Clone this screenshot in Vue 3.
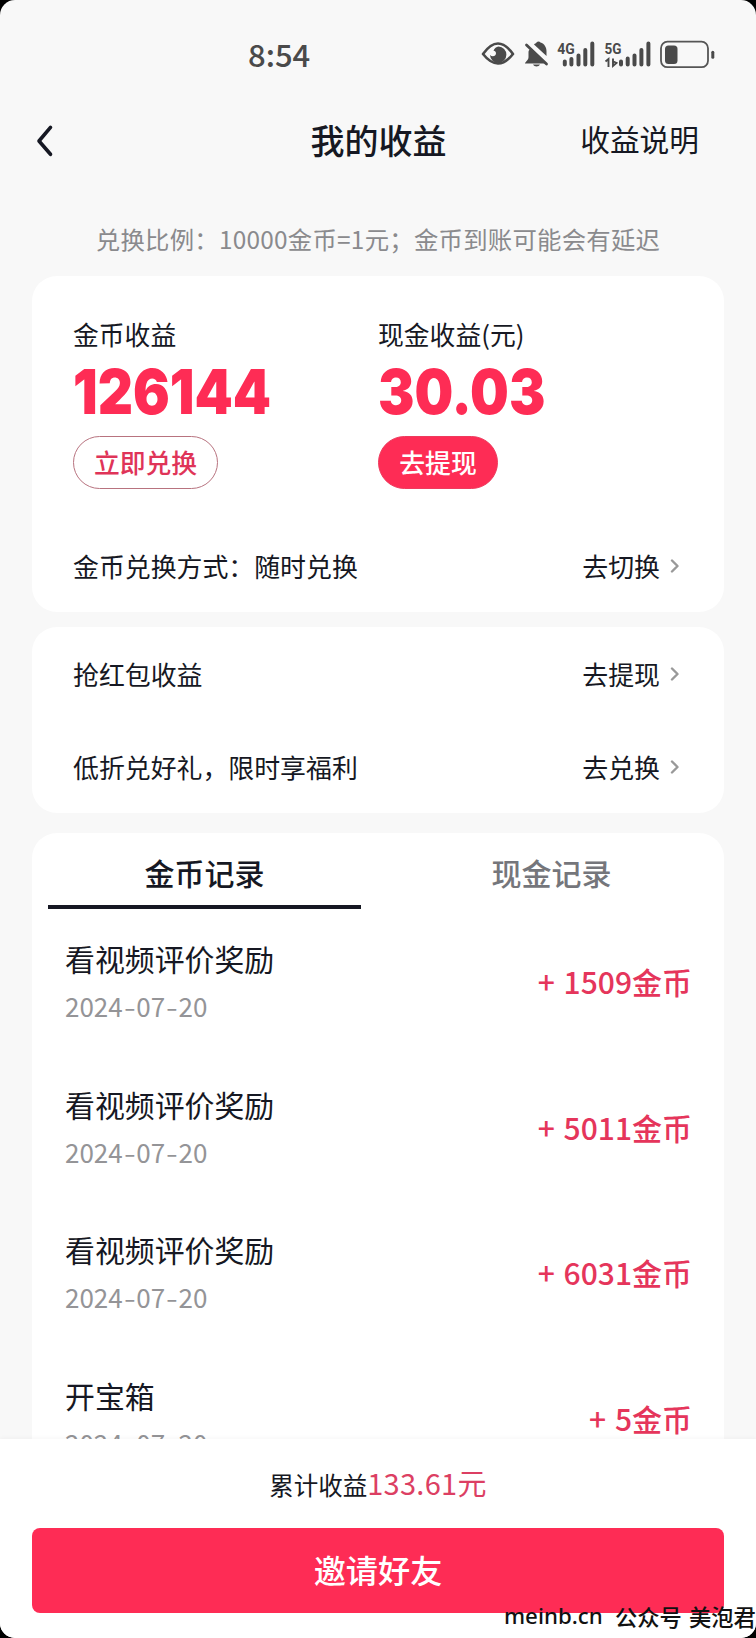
<script setup>
const rows = [
  { label: '抢红包收益', action: '去提现' },
  { label: '低折兑好礼，限时享福利', action: '去兑换' },
]
const records = [
  { title: '看视频评价奖励', date: ['2024', '07', '20'], amount: '1509' },
  { title: '看视频评价奖励', date: ['2024', '07', '20'], amount: '5011' },
  { title: '看视频评价奖励', date: ['2024', '07', '20'], amount: '6031' },
  { title: '开宝箱', date: ['2024', '07', '20'], amount: '5' },
]
</script>

<template>
  <div class="phone">
    <header class="status">
      <span class="clock">8:54</span>
      <svg class="status-icons" width="240" height="44" viewBox="0 -8 240 44" fill="#4a4a4a">
        <path d="M2 15Q17 -6 32 15Q17 34 2 15Z" fill="none" stroke="#4a4a4a" stroke-width="2.600" stroke-linejoin="round" />
        <path d="M17.500 7.500a8.200 8.200 0 1 1-8.500 8.500c2.500 2.500 6 1 6-1.700c0-1.800-1.300-2.800-2.500-2.600c1-2.400 2.800-4 5-4.200z" />
        <path d="M50 10L65 24.500H44c.3-2 3.500-3 3.500-6.500V13c0-1.500.8-2.500 2.500-3z" />
        <path d="M53 5.500c1-1 2-1.300 2.500-2c1-1.500 3-1.500 4 0c4 1.200 6 5 6 9v4.500z" />
        <path d="M52 25.500h7c-1.200 2.500-5.800 2.500-7 0z" />
        <path d="M45.500 6L65.500 25" fill="none" stroke="#4a4a4a" stroke-width="2.800" stroke-linecap="round" />
        <path d="M48.500 4.500L66 21" fill="none" stroke="#f8f8f8" stroke-width="1.800" />
        <text class="net" x="76.300" y="14.500" textLength="17.500" lengthAdjust="spacingAndGlyphs">4G</text>
        <text class="net" x="123.500" y="14.500" textLength="17" lengthAdjust="spacingAndGlyphs">5G</text>
        <g stroke="#4a4a4a" stroke-width="4" stroke-linecap="round">
          <path d="M83.800 22.500v3M90.400 20v5.500M97.500 16.500v9M104.300 11v14.500M111.300 4.500v21" />
          <path d="M140 22.500v3M146.700 19.500v6M153.500 16.500v9M160.400 11v14.500M167.400 4.500v21" />
        </g>
        <path d="M124.500 22.500l3-2.500v8M132 19.500v7.500l3.500-3l-3-1.500" fill="none" stroke="#4a4a4a" stroke-width="1.900" />
        <rect x="180" y="2.700" width="47" height="25.500" rx="6.500" fill="none" stroke="#555" stroke-width="1.800" />
        <rect x="184" y="6.500" width="12.500" height="18.500" rx="3.500" />
        <rect x="230.300" y="11.700" width="3" height="8" rx="1.500" />
      </svg>
    </header>

    <nav class="nav">
      <svg class="back" width="18" height="34" viewBox="0 0 18 34">
        <path d="M14.500 3.300L3 17L14.500 30.300" fill="none" stroke="#161823" stroke-width="3.600" stroke-linecap="round" stroke-linejoin="round" />
      </svg>
      <h1 class="title">我的收益</h1>
      <span class="help">收益说明</span>
    </nav>

    <p class="notice">兑换比例：10000金币=1元；金币到账可能会有延迟</p>

    <section class="card summary">
      <div class="totals">
        <div class="total coins">
          <div class="label">金币收益</div>
          <div class="big">126144</div>
          <button class="pill outline">立即兑换</button>
        </div>
        <div class="total">
          <div class="label">现金收益(元)</div>
          <div class="big">30.03</div>
          <button class="pill solid">去提现</button>
        </div>
      </div>
      <div class="row">
        <span>金币兑换方式：随时兑换</span>
        <span class="action">去切换
          <svg class="chev" width="10" height="14" viewBox="0 0 10 14"><path d="M2 1.500L7.500 7L2 12.500" /></svg>
        </span>
      </div>
    </section>

    <section class="card links">
      <div v-for="r in rows" :key="r.label" class="row">
        <span>{{ r.label }}</span>
        <span class="action">{{ r.action }}
          <svg class="chev" width="10" height="14" viewBox="0 0 10 14"><path d="M2 1.500L7.500 7L2 12.500" /></svg>
        </span>
      </div>
    </section>

    <section class="card history">
      <div class="tabs">
        <div class="tab active">金币记录</div>
        <div class="tab">现金记录</div>
      </div>
      <div v-for="(r, i) in records" :key="i" class="record">
        <div>
          <div class="name">{{ r.title }}</div>
          <div class="date">{{ r.date[0] }}<span class="dash">-</span>{{ r.date[1] }}<span class="dash">-</span>{{ r.date[2] }}</div>
        </div>
        <div class="amount"><span class="plus">+</span> {{ r.amount }}金币</div>
      </div>
    </section>

    <footer class="footer">
      <div class="sum">累计收益<span class="sum-value">133.61元</span></div>
      <button class="invite">邀请好友</button>
    </footer>
    <div class="mark"><span class="site">meinb.cn</span><span class="gzh">公众号</span><span>美泡君</span></div>
  </div>
</template>

<style>
body { margin: 0; background: #000; }
</style>

<style scoped>
.phone {
  position: relative;
  box-sizing: border-box;
  width: 756px;
  height: 1638px;
  overflow: hidden;
  border-radius: 15px;
  background: #f8f8f8;
  color: #161823;
  font-family: "Noto Sans CJK SC", sans-serif;
  display: flex;
  flex-direction: column;
}
.status {
  height: 108px;
  flex: none;
  display: flex;
  justify-content: space-between;
  align-items: flex-start;
  padding: 31px 35px 0 248px;
  box-sizing: border-box;
}
.clock {
  margin-top: 7px;
  font: 500 31px/32px "Noto Sans CJK SC", sans-serif;
  color: #4a4a4a;
}
.net { font: 700 15.500px Roboto, sans-serif; }
.nav {
  height: 66px;
  flex: none;
  display: grid;
  grid-template-columns: 1fr auto 1fr;
  align-items: center;
  padding: 0 57px 0 36px;
}
.title { margin: 0 0 3px 0; padding-left: 22px; font-size: 34px; line-height: 40px; font-weight: 500; }
.help { justify-self: end; font-size: 29.700px; line-height: 40px; margin-bottom: 4px; }
.notice {
  margin: 48px 0 0;
  height: 54px;
  flex: none;
  text-align: center;
  white-space: nowrap;
  font-size: 24.400px;
  letter-spacing: 0.240px;
  line-height: 34px;
  color: #8a8a8d;
}
.card {
  margin: 0 32px;
  flex: none;
  border-radius: 25px;
  background: #fff;
  box-sizing: border-box;
}
.summary { height: 336px; padding: 40px 41px 0; }
.totals { display: flex; height: 229px; }
.coins { width: 305px; }
.label { font-size: 25.800px; line-height: 36px; }
.big {
  width: max-content;
  font: 900 62px/64px Inter, sans-serif;
  color: #fe2c55;
  margin-top: 8px;
  transform: scaleX(0.880);
  transform-origin: left center;
}
.pill {
  display: block;
  height: 53px;
  box-sizing: border-box;
  margin: 12px 0 0;
  padding: 0 0 2px;
  border: 1px solid #b8737f;
  border-radius: 27px;
  font: 500 25.800px/49px "Noto Sans CJK SC", sans-serif;
}
.outline { width: 145px; background: #fff; color: #df3458; }
.solid { width: 120px; background: #fe2c55; border-color: #ee3b5d; color: #fff; }
.row {
  display: flex;
  justify-content: space-between;
  font-size: 25.900px;
  line-height: 40px;
}
.action { display: flex; align-items: center; padding-right: 3px; }
.chev { margin: 0 0 0 10px; }
.chev path { fill: none; stroke: #999; stroke-width: 2.400; stroke-linecap: round; stroke-linejoin: round; }
.summary .row { margin-top: 1px; }
.links { height: 186px; margin-top: 15px; padding: 27px 41px 0; display: flex; flex-direction: column; gap: 53px; }
.history { height: 640px; margin-top: 20px; padding: 0 16px; }
.tabs { display: grid; grid-template-columns: 313px 313px; justify-content: space-between; height: 76px; margin-bottom: 27px; }
.tab { box-sizing: border-box; height: 76px; padding-top: 17px; font-size: 30px; line-height: 44px; font-weight: 500; text-align: center; color: #75767b; }
.active { color: #161823; border-bottom: 4px solid #161823; }
.record { display: flex; justify-content: space-between; height: 145.600px; padding: 0 16px 0 17px; }
.name { font-size: 29.900px; line-height: 44px; }
.date { font-size: 26px; line-height: 36px; margin-top: 8px; color: #949497; }
.dash { display: inline-block; width: 13.500px; text-align: center; transform: scaleX(1.300); }
.amount { font-size: 30px; line-height: 44px; margin-top: 23px; font-weight: 500; color: #e5355b; white-space: nowrap; }
.plus { margin-right: 2px; }
.footer {
  position: absolute;
  left: 0;
  right: 0;
  bottom: 0;
  height: 199px;
  background: #fff;
  box-shadow: 0 -1px 4px rgba(0, 0, 0, 0.04);
}
.sum { height: 89px; padding-top: 21px; box-sizing: border-box; text-align: center; font-size: 24.500px; line-height: 44px; }
.sum-value { font-size: 29px; letter-spacing: 0.300px; color: #dc3f63; }
.invite {
  display: block;
  width: 692px;
  height: 85px;
  margin: 0 32px;
  padding: 0 0 3px;
  border: 0;
  border-radius: 8px;
  background: #fe2c55;
  color: #fff;
  font: 500 32.200px/40px "Noto Sans CJK SC", sans-serif;
}
.mark {
  position: absolute;
  left: 504px;
  top: 1600px;
  display: flex;
  white-space: nowrap;
  color: #111;
  font: 500 22.300px/32px "Noto Sans CJK SC", sans-serif;
}
.site { width: 111px; font-family: "Noto Sans", sans-serif; }
.gzh { width: 74px; }
</style>
